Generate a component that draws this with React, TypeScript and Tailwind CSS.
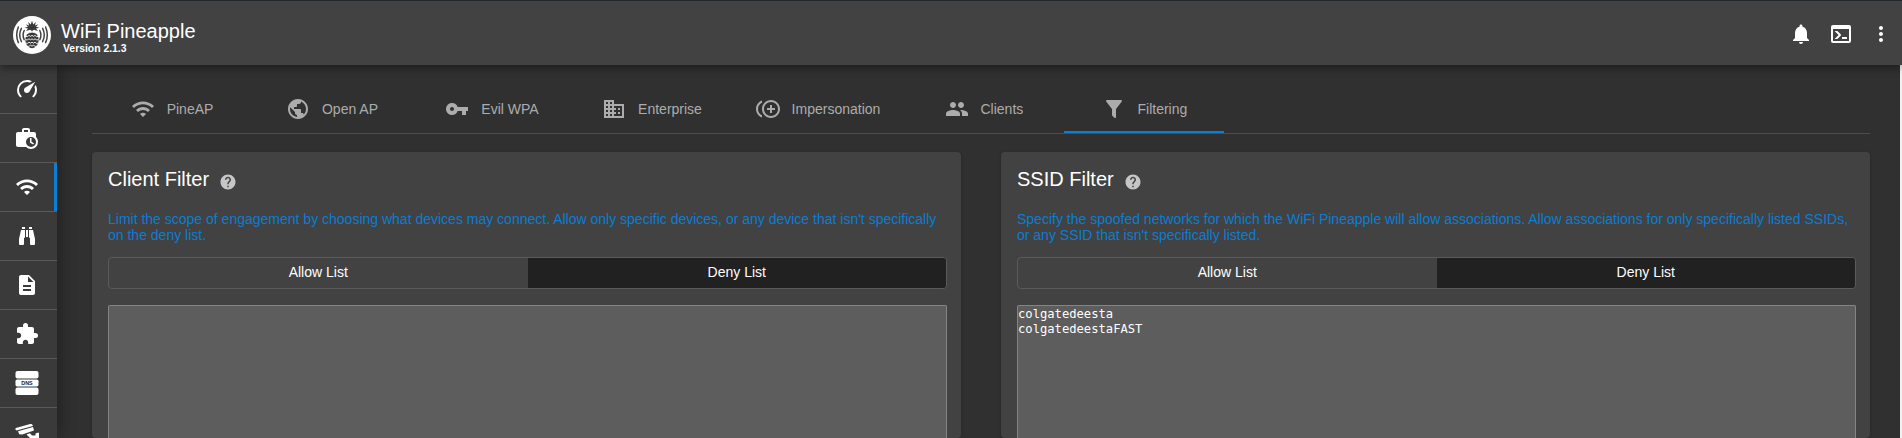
import React from "react";
import {
  MdWifi, MdPublic, MdVpnKey, MdBusiness, MdControlPointDuplicate, MdPeople,
  MdDescription, MdExtension, MdNotifications, MdMoreVert, MdHelp,
} from "react-icons/md";

function Glyph({ d }: { d: string }) {
  return (
    <svg viewBox="0 0 24 24" className="size-6 shrink-0 fill-current">
      <path d={d} />
    </svg>
  );
}

const SPEEDOMETER =
  "M12,16A3,3 0 0,1 9,13C9,11.88 9.61,10.9 10.5,10.39L20.21,4.77L14.68,14.35C14.18,15.33 13.17,16 12,16M12,3C13.81,3 15.5,3.5 16.97,4.32L14.87,5.53C14,5.19 13,5 12,5A8,8 0 0,0 4,13C4,15.21 4.89,17.21 6.34,18.65H6.35C6.74,19.04 6.74,19.67 6.35,20.06C5.96,20.45 5.32,20.45 4.93,20.07V20.07C3.12,18.26 2,15.76 2,13A10,10 0 0,1 12,3M22,13C22,15.76 20.88,18.26 19.07,20.07V20.07C18.68,20.45 18.05,20.45 17.66,20.06C17.27,19.67 17.27,19.04 17.66,18.65V18.65C19.11,17.2 20,15.21 20,13C20,12 19.81,11 19.46,10.1L20.67,8C21.5,9.5 22,11.18 22,13Z";
const BRIEFCASE_CLOCK =
  "M21,11.11C22.24,12.37 23,14.1 23,16A7,7 0 0,1 16,23C14.1,23 12.37,22.24 11.11,21H3C1.89,21 1,20.1 1,19V8C1,6.89 1.89,6 3,6H7V4C7,2.89 7.89,2 9,2H13A2,2 0 0,1 15,4V6H19A2,2 0 0,1 21,8V11.11M13,6V4H9V6H13M16,11A5,5 0 0,0 11,16A5,5 0 0,0 16,21A5,5 0 0,0 21,16A5,5 0 0,0 16,11M15,12H16.5V15.82L18.94,17.23L18.19,18.53L15,16.69V12Z";
const BINOCULARS =
  "M11,6H13V13H11V6M9,20A1,1 0 0,1 8,21H5A1,1 0 0,1 4,20V15L6,6H10V13A1,1 0 0,1 9,14V20M10,5H7V3H10V5M15,20V14A1,1 0 0,1 14,13V6H18L20,15V20A1,1 0 0,1 19,21H16A1,1 0 0,1 15,20M14,5V3H17V5H14Z";
const CONSOLE =
  "M20,19V7H4V19H20M20,3A2,2 0 0,1 22,5V19A2,2 0 0,1 20,21H4A2,2 0 0,1 2,19V5C2,3.89 2.9,3 4,3H20M13,17V15H18V17H13M9.58,13L5.57,9H8.4L11.7,12.3C12.09,12.69 12.09,13.33 11.7,13.72L8.42,17H5.59L9.58,13Z";
const FILTER =
  "M14,12V19.88C14.04,20.18 13.94,20.5 13.71,20.71C13.32,21.1 12.69,21.1 12.3,20.71L10.29,18.7C10.06,18.47 9.96,18.16 10,17.87V12H9.97L4.21,4.62C3.87,4.19 3.95,3.56 4.38,3.22C4.57,3.08 4.78,3 5,3V3H19V3C19.22,3 19.43,3.08 19.62,3.22C20.05,3.56 20.13,4.19 19.79,4.62L14.03,12H14Z";

function DnsIcon() {
  return (
    <svg viewBox="0 0 24 24" className="size-6 shrink-0">
      <rect x="0.5" y="0" width="23" height="7.4" rx="2" fill="#fff" />
      <rect x="0.5" y="8.6" width="23" height="6.8" rx="1.6" fill="#fff" />
      <rect x="0.5" y="16.6" width="23" height="7.4" rx="2" fill="#fff" />
      <path d="M2 7.9H22M2 16H22" stroke="#999" strokeWidth="1" />
      <text x="12" y="14.1" textAnchor="middle" fontSize="5.4" fontWeight="700" fontFamily="Liberation Sans, sans-serif" fill="#222">DNS</text>
    </svg>
  );
}

function CameraIcon() {
  return (
    <svg viewBox="0 0 24 24" className="size-6 shrink-0" fill="#fff">
      <path d="M0.2 9.3L0.8 8L15.2 4Q17 3.6 17.6 5L17.8 6L1.6 10.6Z" />
      <path d="M3 11.3L18 7L19 10.6L7.2 14.6L4.2 14.2Z" />
      <path d="M11.5 14.4L15 13.2L17 15.4H20.5V13.4L22.4 12.8H24V22H20.5V18H15Z" />
    </svg>
  );
}

function Logo() {
  return (
    <svg viewBox="0 0 38 38" className="size-[38px] shrink-0">
      <circle cx="19" cy="19" r="19" fill="#fff" />
      <g fill="none" stroke="#424242" strokeWidth="1.5" strokeLinecap="round">
        <path d="M11.2 14.5Q9 19 11.2 23.6M8.4 12.4Q5 19 8.4 25.6M5.4 11Q2 19 5.4 26.6" />
        <path d="M26.8 14.5Q29 19 26.8 23.6M29.6 12.4Q33 19 29.6 25.6M32.6 11Q36 19 32.6 26.6" />
      </g>
      <path
        fill="#383838"
        d="M19 4.4L20.2 8.4L22.8 6L22 9.4L25.4 8.2L23 10.8L26.4 11.8L23 12.6L25 15L21 13.8L19 15L17 13.8L13 15L15 12.6L11.6 11.8L15 10.8L12.6 8.2L16 9.4L15.2 6L17.8 8.4Z"
      />
      <ellipse cx="19" cy="24" rx="6.7" ry="8.3" fill="#383838" />
      <path
        fill="none"
        stroke="#fff"
        strokeWidth="0.9"
        d="M12.6 20.4Q14.4 21.4 16 19.4Q17.4 21.4 19 19.4Q20.6 21.4 22 19.4Q23.6 21.4 25.4 20.4M12.2 23.6Q14.2 24.8 16 22.8Q17.4 24.8 19 22.8Q20.6 24.8 22 22.8Q23.8 24.8 25.8 23.6M12.6 27Q14.4 28.2 16 26.2Q17.4 28.2 19 26.2Q20.6 28.2 22 26.2Q23.6 28.2 25.4 27M14.2 30.2Q16 31 17.4 29.2Q19 31 20.6 29.2Q22 31 23.8 30.2M13.5 17.4Q19 14.8 24.5 17.4"
      />
    </svg>
  );
}

const sideItems: { icon: React.ReactNode; active?: boolean }[] = [
  { icon: <Glyph d={SPEEDOMETER} /> },
  { icon: <Glyph d={BRIEFCASE_CLOCK} /> },
  { icon: <MdWifi size={24} />, active: true },
  { icon: <Glyph d={BINOCULARS} /> },
  { icon: <MdDescription size={24} /> },
  { icon: <MdExtension size={24} /> },
  { icon: <DnsIcon /> },
  { icon: <CameraIcon /> },
];

const tabs: { label: string; icon: React.ReactNode; active?: boolean }[] = [
  { label: "PineAP", icon: <MdWifi size={24} /> },
  { label: "Open AP", icon: <MdPublic size={24} /> },
  { label: "Evil WPA", icon: <MdVpnKey size={24} /> },
  { label: "Enterprise", icon: <MdBusiness size={24} /> },
  { label: "Impersonation", icon: <MdControlPointDuplicate size={24} /> },
  { label: "Clients", icon: <MdPeople size={24} /> },
  { label: "Filtering", icon: <Glyph d={FILTER} />, active: true },
];

function FilterCard({ title, description, entries }: { title: string; description: string; entries: string[] }) {
  return (
    <section className="flex flex-1 flex-col rounded bg-[#424242] pt-[15px] pr-[14px] pl-4 shadow-[0_1px_3px_rgba(0,0,0,0.25)]">
      <div className="flex h-6 items-center">
        <h2 className="text-xl leading-6 text-white">{title}</h2>
        <MdHelp size={18} className="mt-1.5 ml-2.5 text-[#c6c6c6]" />
      </div>
      <p className="mt-5 h-8 text-sm leading-4 text-[#0a7dd3]">{description}</p>
      <div className="mt-[14px] flex h-8 shrink-0 overflow-hidden rounded border border-[#5a5a5a] text-sm text-white">
        <button className="flex-1 pb-0.5">Allow List</button>
        <button className="flex-1 bg-[#212121] pb-0.5">Deny List</button>
      </div>
      <div className="mt-4 flex-1 rounded-t-xs border border-b-0 border-[#858585] bg-[#5d5d5d] pt-px font-['DejaVu_Sans_Mono',monospace] text-[12.17px] leading-[15px] text-white">
        {entries.map((e) => (
          <div key={e}>{e}</div>
        ))}
      </div>
    </section>
  );
}

export default function App() {
  return (
    <div className="flex h-[438px] w-[1902px] flex-col overflow-hidden bg-[#303030] font-['Liberation_Sans',Arial,sans-serif]">
      <header className="relative z-20 flex h-[65px] shrink-0 items-center border-t border-[#23282d] bg-[#424242] pt-1 pr-px pl-[13px] text-white shadow-[0_3px_8px_rgba(0,0,0,0.4)]">
        <Logo />
        <div className="ml-2.5 flex flex-col pt-1">
          <span className="text-xl leading-6">WiFi Pineapple</span>
          <span className="pl-0.5 text-[10.4px] leading-3 font-bold">Version 2.1.3</span>
        </div>
        <div className="ml-auto flex pb-0.5">
          <span className="flex w-10 justify-center"><MdNotifications size={24} /></span>
          <span className="flex w-10 justify-center"><Glyph d={CONSOLE} /></span>
          <span className="flex w-10 justify-center"><MdMoreVert size={24} /></span>
        </div>
      </header>
      <div className="flex min-h-0 flex-1">
        <nav className="relative z-10 flex w-[57px] shrink-0 flex-col bg-[#3a3a3a] text-white shadow-[2px_0_16px_rgba(0,0,0,0.35)]">
          {sideItems.map((item, i) => (
            <div
              key={i}
              className={
                item.active
                  ? "flex h-[49px] shrink-0 items-stretch border-b border-[#5a5a5a]"
                  : "flex h-[49px] shrink-0 items-stretch border-b border-[#5a5a5a] pr-[3px]"
              }
            >
              <span className="flex flex-1 items-center justify-center">{item.icon}</span>
              {item.active && <span className="w-[3px] bg-[#0a7fd2]" />}
            </div>
          ))}
        </nav>
        <main className="flex flex-1 flex-col pr-[30px] pl-[35px]">
          <div className="mt-5 flex h-[49px] shrink-0 border-b border-[#4d4d4d] text-sm">
            {tabs.map((tab) => (
              <div key={tab.label} className="flex min-w-40 flex-col">
                <div
                  className={
                    tab.active
                      ? "flex h-[46px] items-center justify-center gap-3 pt-0.5 pr-[23px] pl-6 text-[#acacac]"
                      : "flex h-[46px] items-center justify-center gap-3 px-[23.6px] pt-0.5 text-[#acacac]"
                  }
                >
                  {tab.icon}
                  <span>{tab.label}</span>
                </div>
                {tab.active && <span className="h-0.5 bg-[#0a7fd2]" />}
              </div>
            ))}
          </div>
          <div className="mt-[18px] flex flex-1 gap-10">
            <FilterCard
              title="Client Filter"
              description="Limit the scope of engagement by choosing what devices may connect. Allow only specific devices, or any device that isn't specifically on the deny list."
              entries={[]}
            />
            <FilterCard
              title="SSID Filter"
              description="Specify the spoofed networks for which the WiFi Pineapple will allow associations. Allow associations for only specifically listed SSIDs, or any SSID that isn't specifically listed."
              entries={["colgatedeesta", "colgatedeestaFAST"]}
            />
          </div>
        </main>
        <div className="w-0.5 shrink-0 bg-[#f1f1f1]" />
      </div>
    </div>
  );
}
